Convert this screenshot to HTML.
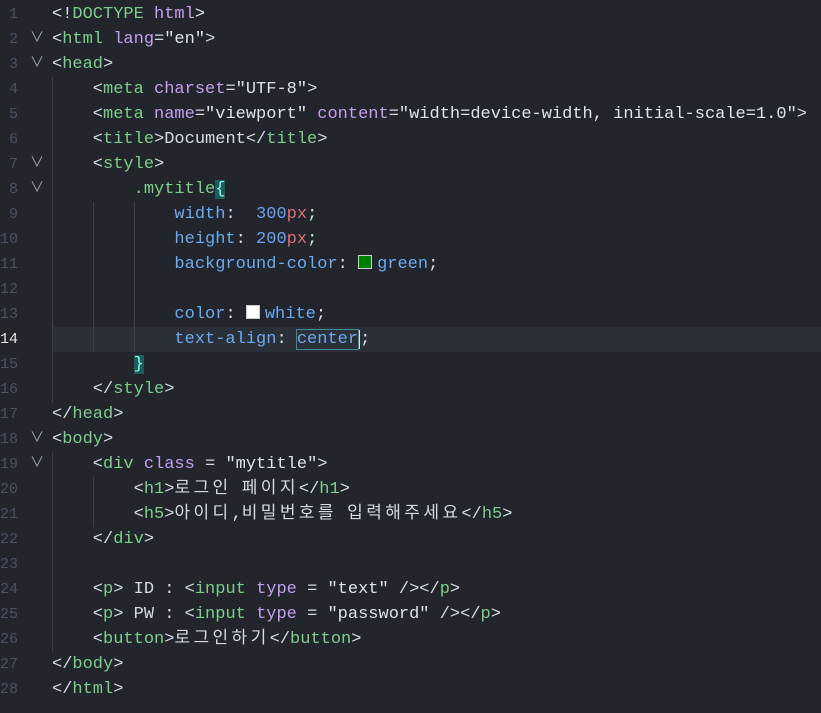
<!DOCTYPE html>
<html><head><meta charset="utf-8"><style>
body{margin:0;width:821px;height:713px;background:#22262c;overflow:hidden;font-family:"Liberation Mono","Noto Sans CJK KR",monospace;font-size:17px;}
.l{position:absolute;left:0;height:25px;line-height:25px;width:821px;white-space:pre;color:#d4dbe4;overflow:hidden}
.n{position:absolute;left:0;width:18px;text-align:right;color:#4b5263;font-size:15px}
.f{position:absolute;left:30px;color:#a0a6b0;font-size:14px}
.c{position:absolute;left:52px}
.t{color:#7ccf8a}.a{color:#c69ef0}.s{color:#dbe3ee}.p{color:#6aaaf0}.v{color:#6aa0f5}.u{color:#e06c75}.k{color:#6aaaf0}
.h{font-family:"Noto Sans CJK KR",sans-serif;font-size:17px;letter-spacing:3.4px;line-height:0}
.g{position:absolute;width:1px;background:#3a3f48}
.sw{display:inline-block;width:12px;height:12px;border:1px solid #ccc;vertical-align:-1px;margin-right:5px}
</style></head><body>
<div style="position:absolute;left:52px;top:327px;width:769px;height:25px;background:#2b3038"></div>
<div class="g" style="left:52px;top:77px;height:326px"></div>
<div class="g" style="left:52px;top:452px;height:200px"></div>
<div class="g" style="left:93px;top:202px;height:150px"></div>
<div class="g" style="left:93px;top:477px;height:50px"></div>
<div class="g" style="left:134px;top:202px;height:150px"></div>
<div class="l" style="top:2px"><span class="n">1</span><span class="c"><span class="s">&lt;!</span><span class="t">DOCTYPE</span> <span class="a">html</span><span class="s">&gt;</span></span></div>
<div class="l" style="top:27px"><span class="n">2</span><span class="f">∨</span><span class="c">&lt;<span class="t">html</span> <span class="a">lang</span>=<span class="s">"en"</span>&gt;</span></div>
<div class="l" style="top:52px"><span class="n">3</span><span class="f">∨</span><span class="c">&lt;<span class="t">head</span>&gt;</span></div>
<div class="l" style="top:77px"><span class="n">4</span><span class="c">    &lt;<span class="t">meta</span> <span class="a">charset</span>=<span class="s">"UTF-8"</span>&gt;</span></div>
<div class="l" style="top:102px"><span class="n">5</span><span class="c">    &lt;<span class="t">meta</span> <span class="a">name</span>=<span class="s">"viewport"</span> <span class="a">content</span>=<span class="s">"width=device-width, initial-scale=1.0"</span>&gt;</span></div>
<div class="l" style="top:127px"><span class="n">6</span><span class="c">    &lt;<span class="t">title</span>&gt;Document&lt;/<span class="t">title</span>&gt;</span></div>
<div class="l" style="top:152px"><span class="n">7</span><span class="f">∨</span><span class="c">    &lt;<span class="t">style</span>&gt;</span></div>
<div class="l" style="top:177px"><span class="n">8</span><span class="f">∨</span><span class="c">        <span class="t">.mytitle</span><span style="background:#1f5a60;color:#8fd">{</span></span></div>
<div class="l" style="top:202px"><span class="n">9</span><span class="c">            <span class="p">width</span>:  <span class="v">300</span><span class="u">px</span>;</span></div>
<div class="l" style="top:227px"><span class="n">10</span><span class="c">            <span class="p">height</span>: <span class="v">200</span><span class="u">px</span>;</span></div>
<div class="l" style="top:252px"><span class="n">11</span><span class="c">            <span class="p">background-color</span>: <span class="sw" style="background:#008000"></span><span class="k">green</span>;</span></div>
<div class="l" style="top:277px"><span class="n">12</span></div>
<div class="l" style="top:302px"><span class="n">13</span><span class="c">            <span class="p">color</span>: <span class="sw" style="background:#fff"></span><span class="k">white</span>;</span></div>
<div class="l" style="top:327px"><span class="n" style="color:#e6e6e6">14</span><span class="c">            <span class="p">text-align</span>: <span class="k" style="outline:1px solid #3e8a95">center</span><span style="border-left:2px solid #dde">;</span></span></div>
<div class="l" style="top:352px"><span class="n">15</span><span class="c">        <span style="background:#1f5a60;color:#8fd">}</span></span></div>
<div class="l" style="top:377px"><span class="n">16</span><span class="c">    &lt;/<span class="t">style</span>&gt;</span></div>
<div class="l" style="top:402px"><span class="n">17</span><span class="c">&lt;/<span class="t">head</span>&gt;</span></div>
<div class="l" style="top:427px"><span class="n">18</span><span class="f">∨</span><span class="c">&lt;<span class="t">body</span>&gt;</span></div>
<div class="l" style="top:452px"><span class="n">19</span><span class="f">∨</span><span class="c">    &lt;<span class="t">div</span> <span class="a">class</span> = <span class="s">"mytitle"</span>&gt;</span></div>
<div class="l" style="top:477px"><span class="n">20</span><span class="c">        &lt;<span class="t">h1</span>&gt;<span class="h">로그인</span> <span class="h">페이지</span>&lt;/<span class="t">h1</span>&gt;</span></div>
<div class="l" style="top:502px"><span class="n">21</span><span class="c">        &lt;<span class="t">h5</span>&gt;<span class="h">아이디</span>,<span class="h">비밀번호를</span> <span class="h">입력해주세요</span>&lt;/<span class="t">h5</span>&gt;</span></div>
<div class="l" style="top:527px"><span class="n">22</span><span class="c">    &lt;/<span class="t">div</span>&gt;</span></div>
<div class="l" style="top:552px"><span class="n">23</span></div>
<div class="l" style="top:577px"><span class="n">24</span><span class="c">    &lt;<span class="t">p</span>&gt; ID : &lt;<span class="t">input</span> <span class="a">type</span> = <span class="s">"text"</span> /&gt;&lt;/<span class="t">p</span>&gt;</span></div>
<div class="l" style="top:602px"><span class="n">25</span><span class="c">    &lt;<span class="t">p</span>&gt; PW : &lt;<span class="t">input</span> <span class="a">type</span> = <span class="s">"password"</span> /&gt;&lt;/<span class="t">p</span>&gt;</span></div>
<div class="l" style="top:627px"><span class="n">26</span><span class="c">    &lt;<span class="t">button</span>&gt;<span class="h">로그인하기</span>&lt;/<span class="t">button</span>&gt;</span></div>
<div class="l" style="top:652px"><span class="n">27</span><span class="c">&lt;/<span class="t">body</span>&gt;</span></div>
<div class="l" style="top:677px"><span class="n">28</span><span class="c">&lt;/<span class="t">html</span>&gt;</span></div>
</body></html>
